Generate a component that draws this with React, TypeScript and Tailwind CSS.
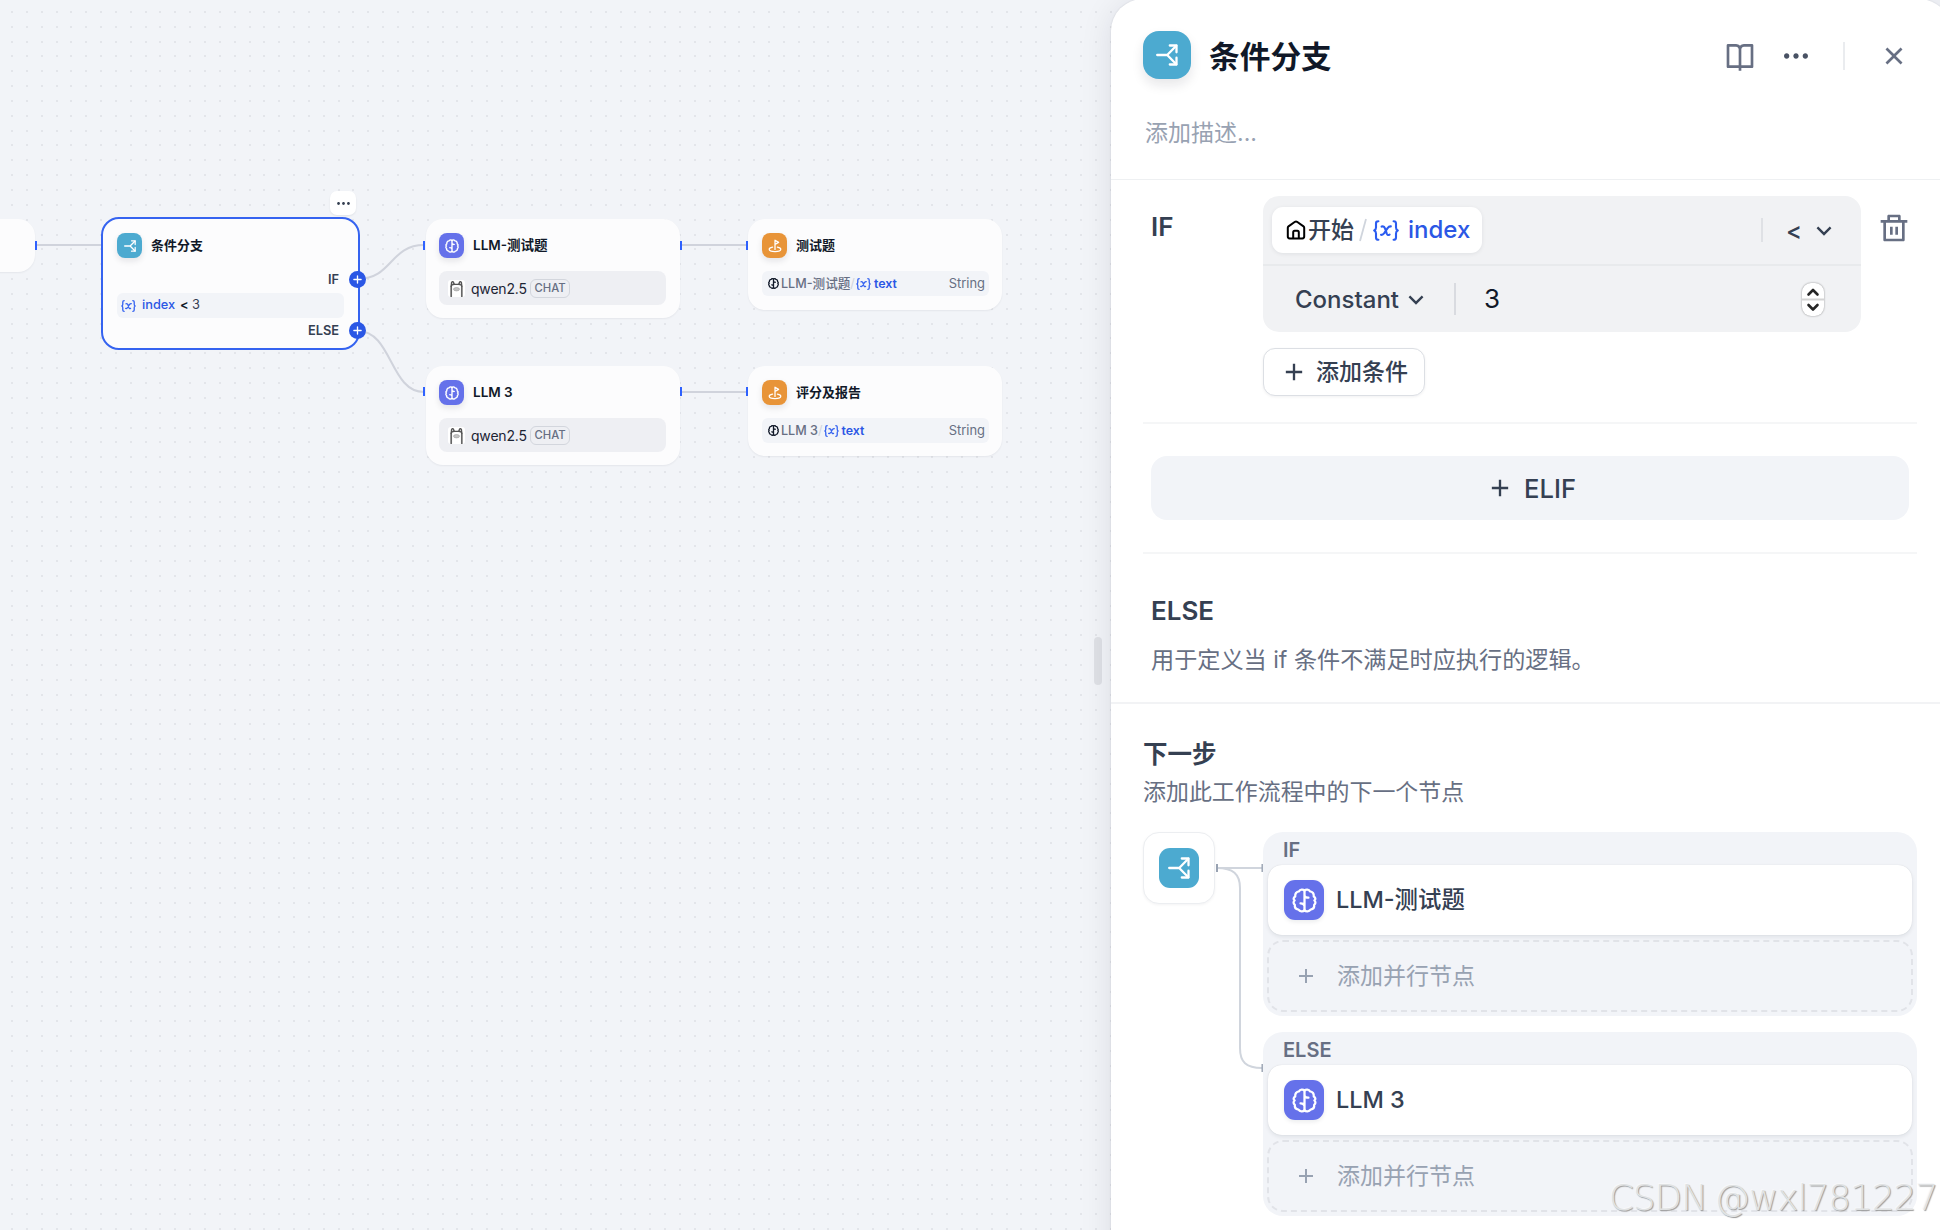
import type { ReactNode } from 'react'
import {
  RiAddLine,
  RiArrowDownSLine,
  RiBookOpenLine,
  RiCloseLine,
  RiDeleteBinLine,
  RiMoreFill,
} from 'react-icons/ri'

const BranchGlyph = ({ className }: { className: string }) => (
  <svg viewBox="0 0 22 22" fill="none" stroke="white" strokeWidth="2.3" strokeLinecap="round" strokeLinejoin="round" className={className}>
    <path d="M1.2 11H11.2M11.2 11L20.3 1.8M11.2 11L20.3 20.2" />
    <path d="M13.8 1.5H20.5V8.3M13.8 20.5H20.5V13.7" />
  </svg>
)

const BrainGlyph = ({ className, width = 1.9 }: { className: string; width?: number }) => (
  <svg viewBox="0 0 24 24" fill="none" stroke="currentColor" strokeWidth={width} strokeLinecap="round" strokeLinejoin="round" className={className}>
    <path d="M12 2.4C10.6 1.2 7.8 1.2 6.8 3.2C4.2 3.4 2.7 5.6 3.1 8.2C1.3 9.3 1.1 10.9 2.5 12C1.1 13.2 1.2 14.9 2.7 16.2C2.4 18.7 3.8 20.4 6.2 20.7C7.6 22.8 10.6 22.8 12 21.5" />
    <path d="M12 2.4C13.4 1.2 16.2 1.2 17.2 3.2C19.8 3.4 21.3 5.6 20.9 8.2C22.7 9.3 22.9 10.9 21.5 12C22.9 13.2 22.8 14.9 21.3 16.2C21.6 18.7 20.2 20.4 17.8 20.7C16.4 22.8 13.4 22.8 12 21.5" />
    <path d="M12 2.4V21.5M12 7.3C12.6 8.8 13.8 9.4 15.8 9.3M12 17.1C11.4 15.4 10.2 14.7 8.2 14.8" />
  </svg>
)

const EndGlyph = () => (
  <svg viewBox="0 0 14 14" fill="none" stroke="white" strokeWidth="1.25" strokeLinecap="round" strokeLinejoin="round" className="size-[14px]">
    <path d="M7 10.4V1.2L10.6 3.4L7 5.4" />
    <path d="M4.6 8.1C2.4 8.5 1.2 9.2 1.2 10.2C1.2 11.6 3.6 12.5 7 12.5S12.8 11.6 12.8 10.2C12.8 9.2 11.6 8.5 9.4 8.1" />
  </svg>
)

const VarGlyph = ({ className, width = 2.3 }: { className: string; width?: number }) => (
  <svg viewBox="0 0 26 21" fill="none" stroke="currentColor" strokeWidth={width} strokeLinecap="round" strokeLinejoin="round" className={className}>
    <path d="M5.4 1.2C3.4 1.2 3 2 3 3.6V7.6C3 9.4 2.6 10 1.2 10.5C2.6 11 3 11.6 3 13.4V17.4C3 19 3.4 19.8 5.4 19.8" />
    <path d="M20.6 1.2C22.6 1.2 23 2 23 3.6V7.6C23 9.4 23.4 10 24.8 10.5C23.4 11 23 11.6 23 13.4V17.4C23 19 22.6 19.8 20.6 19.8" />
    <path d="M8.6 6.6C10.6 6 11.4 6.6 12 8.4L13.8 13.6C14.4 15.2 15.2 15.4 16.6 14.6M17.8 6.4C16.4 6.2 15.6 6.8 14.6 8.2L11.2 13.2C10.2 14.6 9.4 15.2 8 14.8" />
  </svg>
)

const HomeGlyph = () => (
  <svg viewBox="0 0 20 20" fill="none" stroke="black" strokeWidth="2" strokeLinecap="round" strokeLinejoin="round" className="mb-px size-5">
    <path d="M1.8 7.8C1.8 7.2 2.1 6.7 2.5 6.4L9 1.8C9.6 1.4 10.4 1.4 11 1.8L17.5 6.4C17.9 6.7 18.2 7.2 18.2 7.8V16.6C18.2 17.7 17.5 18.4 16.4 18.4H3.6C2.5 18.4 1.8 17.7 1.8 16.6Z" />
    <path d="M7.2 18V12.4C7.2 11.4 7.7 10.8 8.6 10.8H11.4C12.3 10.8 12.8 11.4 12.8 12.4V18" />
  </svg>
)

const LlamaAvatar = () => (
  <svg viewBox="0 0 17 17" className="size-[17px]">
    <rect width="17" height="17" rx="3" fill="white" />
    <g fill="none" stroke="#555" strokeLinecap="round">
      <path d="M3.2 16.4V6.4M13.8 16.4V6.4" strokeWidth="1.7" stroke="#666" />
      <path d="M3.2 6.4L3.6 2.6C4.2 0.9 5.6 1.4 6 4M13.8 6.4L13.4 2.6C12.8 0.9 11.4 1.4 11 4" strokeWidth="1.4" />
      <path d="M3.6 5.4C5.4 3.6 7 4.4 8.5 4.4S11.6 3.6 13.4 5.4" strokeWidth="1.3" />
    </g>
    <ellipse cx="8.5" cy="9.2" rx="3" ry="1.7" fill="#c4c4c4" stroke="#9a9a9a" strokeWidth="0.6" />
  </svg>
)

const PITCH = 14.845
const dots = Array.from({ length: 75 }, (_, c) =>
  Array.from({ length: 84 }, (_, r) => `M${Math.round(11 + c * PITCH)} ${Math.round(-4 + r * PITCH)}h2v2h-2z`).join(''),
).join('')

const NodeIcon = ({ tone, children }: { tone: string; children: ReactNode }) => (
  <div className={`flex size-[25px] shrink-0 items-center justify-center rounded-[8px] text-white shadow-[0_3px_6px_rgba(16,24,40,0.1)] ${tone}`}>
    {children}
  </div>
)

const nodeBase = 'absolute rounded-[17px] bg-[#fcfcfd] shadow-[0_1px_2px_rgba(16,24,40,0.06)]'

const LlmNode = ({ title, pos }: { title: string; pos: string }) => (
  <div className={`${nodeBase} ${pos} h-[99px] w-[254px] pt-[14px] pl-[13px]`}>
    <div className="flex h-[25px] items-center gap-[9px]">
      <NodeIcon tone="bg-[#6571ea]"><BrainGlyph className="size-[14px]" width={2.4} /></NodeIcon>
      <span className="text-[13.5px] leading-none font-semibold whitespace-nowrap text-[#101828]">{title}</span>
    </div>
    <div className="mt-[13px] flex h-[34px] w-[227px] items-center rounded-[8px] bg-[#eeeff3] pl-[9px]">
      <LlamaAvatar />
      <span className="ml-[6px] w-[59px] pt-px text-[14px] leading-none tracking-[-0.2px] text-[#1d2433]">qwen2.5</span>
      <span className="flex h-[19px] w-10 items-center justify-center rounded-[6px] border border-[#d3d6dd] pt-px text-[11.3px] leading-none font-medium text-[#676f83]">CHAT</span>
    </div>
  </div>
)

const EndNode = ({ title, source, pos }: { title: string; source: string; pos: string }) => (
  <div className={`${nodeBase} ${pos} w-[254px] pt-[14px] pl-[14px]`}>
    <div className="flex h-[25px] items-center gap-[9px]">
      <NodeIcon tone="bg-[#e89438]"><EndGlyph /></NodeIcon>
      <span className="text-[13px] leading-none font-semibold text-[#101828]">{title}</span>
    </div>
    <div className="mt-[13px] flex h-[25px] w-[227px] items-center rounded-[6px] bg-[#f2f4f8] pr-[4px] pl-[6px] text-[12.6px] leading-none font-medium text-[#676f83]">
      <BrainGlyph className="mr-[2px] size-[11px] shrink-0 text-[#101828]" width={2.8} />
      <span className="pt-px whitespace-nowrap">{source}</span>
      <span className="mr-px pt-px font-normal text-[#d0d5dd]">/</span>
      <VarGlyph className="h-[12px] w-[15px] shrink-0 text-[#3563f0]" />
      <span className="ml-[3px] pt-px text-[12.4px] font-semibold text-[#2b57e5]">text</span>
      <span className="ml-auto pt-px text-[12.9px] font-normal">String</span>
    </div>
  </div>
)

const PlusHandle = ({ pos }: { pos: string }) => (
  <div className={`absolute flex size-[17px] items-center justify-center rounded-full bg-[#2b57e5] ${pos}`}>
    <svg viewBox="0 0 10 10" className="size-[9px]" stroke="white" strokeWidth="1.5" strokeLinecap="round"><path d="M5 1v8M1 5h8" /></svg>
  </div>
)

const Canvas = () => (
  <div className="absolute inset-0 overflow-hidden bg-[#f2f4f8]">
    <svg className="absolute inset-0" width="1130" height="1230" shapeRendering="crispEdges"><path d={dots} fill="#e3e5ea" /></svg>
    <svg className="absolute inset-0" width="1130" height="1230" fill="none" stroke="#d0d3dc" strokeWidth="2">
      <path d="M37 245H101M682 245H746M682 392H746" />
      <path d="M358 279C392 279 390 245 424 245M358 331C392 331 390 392 424 392" />
      <path d="M36 241V250M424 241V250M681 241V250M747 241V250M424 387V396M681 387V396M747 387V396" stroke="#2f62ff" />
    </svg>
    <div className={`${nodeBase} top-[219px] left-[-219px] h-[53px] w-[254px]`} />

    <div className="absolute top-[191px] left-[330px] flex h-[24px] w-[26px] items-center justify-center rounded-[7px] bg-white text-[#354052] shadow-[0_1px_2px_rgba(16,24,40,0.08)]">
      <RiMoreFill className="size-[17px]" />
    </div>

    <div className="absolute top-[217px] left-[101px] h-[133px] w-[259px] rounded-[18px] border-2 border-[#3563f0] bg-[#fcfcfd] pt-[14px] pl-[14px]">
      <div className="flex h-[25px] items-center gap-[9px]">
        <NodeIcon tone="bg-[#4caad0]"><BranchGlyph className="size-[12px]" /></NodeIcon>
        <span className="text-[13px] leading-none font-semibold text-[#101828]">条件分支</span>
      </div>
      <div className="mt-[9px] flex h-[26px] w-[222px] items-center justify-end pt-px text-[12.8px] leading-none font-semibold text-[#354052]">IF</div>
      <div className="flex h-[25px] w-[227px] items-center rounded-[6px] bg-[#f2f4f8] pl-[4px] text-[12.8px] leading-none">
        <VarGlyph className="h-[12px] w-[15px] text-[#3563f0]" />
        <span className="ml-[6px] w-[38px] font-medium text-[#2b57e5]">index</span>
        <span className="w-[12px] font-semibold text-[#101828]">&lt;</span>
        <span className="text-[#354052]">3</span>
      </div>
      <div className="flex h-[26px] w-[222px] items-center justify-end text-[12.8px] leading-none font-semibold text-[#354052]">ELSE</div>
    </div>
    <PlusHandle pos="left-[349px] top-[271px]" />
    <PlusHandle pos="left-[349px] top-[322px]" />

    <LlmNode title="LLM-测试题" pos="left-[426px] top-[219px]" />
    <LlmNode title="LLM 3" pos="left-[426px] top-[366px]" />
    <EndNode title="测试题" source="LLM-测试题" pos="left-[748px] top-[219px] h-[91px]" />
    <EndNode title="评分及报告" source="LLM 3" pos="left-[748px] top-[366px] h-[90px]" />
    <div className="absolute top-[637px] left-[1094px] h-[48px] w-[8px] rounded-full bg-[#dfe1e6]" />
  </div>
)

const NextGroup = ({ label, name }: { label: string; name: string }) => (
  <div className="h-[184px] rounded-[20px] bg-[#f2f4f8] px-[4px]">
    <div className="flex h-[33px] items-center pt-[2px] pl-[16px] text-[20px] leading-none font-semibold text-[#676f83]">{label}</div>
    <div className="mx-px flex h-[70px] items-center rounded-[14px] bg-white pl-[16px] shadow-[0_0_1px_rgba(16,24,40,0.15),0_2px_4px_rgba(16,24,40,0.08)]">
      <div className="flex size-10 items-center justify-center rounded-[11px] bg-[#6571ea] text-white shadow-[0_2px_4px_rgba(16,24,40,0.08)]">
        <BrainGlyph className="size-[25px]" width={2.2} />
      </div>
      <span className="ml-[12px] pb-[2px] text-[23.4px] leading-none font-medium text-[#354052]">{name}</span>
    </div>
    <div className="mt-[5px] flex h-[72px] items-center rounded-[16px] border-2 border-dashed border-[#e1e3e8] pl-[25px] text-[#98a2b2]">
      <span className="w-[43px]"><RiAddLine className="size-[24px]" /></span>
      <span className="text-[23px] leading-none">添加并行节点</span>
    </div>
  </div>
)

const Stepper = () => (
  <svg viewBox="0 0 22 33" fill="none" className="h-[33px] w-[22px] rounded-[9px] bg-white shadow-[0_0_2px_rgba(0,0,0,0.45)]">
    <path d="M0 16.5H22" stroke="#d4d4d4" strokeWidth="2" />
    <path d="M6.5 11.5L11 7L15.5 11.5M6.5 22L11 26.5L15.5 22" stroke="#262626" strokeWidth="2.6" strokeLinecap="round" strokeLinejoin="round" />
  </svg>
)

const Panel = () => (
  <div className="absolute top-[-1px] left-[1111px] h-[1300px] w-[840px] rounded-[32px] bg-white shadow-[0_0_2px_rgba(16,24,40,0.12),0_4px_32px_rgba(16,24,40,0.1)]">
    <header className="h-[181px] border-b border-[#eef0f2] pt-[32px] pr-[36px] pl-8">
      <div className="flex h-12 items-center">
        <div className="flex size-12 items-center justify-center rounded-[16px] bg-[#4caad0] shadow-[0_6px_12px_rgba(16,24,40,0.1)]">
          <BranchGlyph className="size-[22px]" />
        </div>
        <h1 className="ml-[18px] pt-[4px] text-[30.7px] leading-none font-semibold text-[#101828]">条件分支</h1>
        <div className="ml-auto flex items-center pt-[2px] text-[#676f83]">
          <RiBookOpenLine className="size-8" />
          <RiMoreFill className="ml-[24px] size-8 text-[#495264]" />
          <div className="ml-[31px] h-7 w-[2px] bg-[#eaecef]" />
          <RiCloseLine className="mr-[5px] ml-[33px] size-8" />
        </div>
      </div>
      <p className="mt-[43px] pl-[2px] text-[23px] leading-none text-[#98a2b2]">添加描述...</p>
    </header>

    <section className="border-b-2 border-[#f2f3f5] pr-[34px] pl-8">
      <div className="flex h-[244px] items-start border-b-2 border-[#f5f6f7] pt-4">
        <div className="w-[120px] pt-[18px] pl-[8px] text-[26px] leading-none font-semibold text-[#354052]">IF</div>
        <div>
          <div className="h-[136px] w-[598px] rounded-[16px] bg-[#f1f2f4]">
            <div className="flex h-[70px] items-center border-b-2 border-[#e8eaec] pl-[9px]">
              <div className="flex h-[46px] w-[210px] items-center rounded-[11px] bg-white pl-[14px] text-[23px] leading-none font-medium text-[#354052] shadow-[0_1px_4px_rgba(16,24,40,0.08)]">
                <HomeGlyph />
                <span className="ml-[2px]">开始</span>
                <svg viewBox="0 0 8 24" className="ml-[5px] h-6 w-2" stroke="#d0d5dd" strokeWidth="1.8"><path d="M7 1L1 23" /></svg>
                <VarGlyph className="ml-[6px] h-[21px] w-[26px] text-[#2b5cf0]" width={2.1} />
                <span className="ml-[9px] text-[24px] text-[#2b57e5]">index</span>
              </div>
              <div className="ml-auto h-6 w-[2px] bg-[#dfe1e5]" />
              <span className="mt-[2px] ml-[23px] text-[24px] leading-none font-medium text-[#354052]">&lt;</span>
              <RiArrowDownSLine className="mt-[2px] mr-[23px] ml-[8px] size-7 text-[#354052]" />
            </div>
            <div className="flex h-[66px] items-center pr-[37px] pl-[32px] text-[#354052]">
              <span className="w-[107px] pt-[2px] text-[24px] leading-none font-medium">Constant</span>
              <RiArrowDownSLine className="mt-[2px] size-7" />
              <div className="ml-[24px] h-8 w-[2px] bg-[#d9dbe0]" />
              <span className="ml-[28px] text-[26px] leading-none text-[#101828]">3</span>
              <span className="ml-auto flex pt-px"><Stepper /></span>
            </div>
          </div>
          <div className="mt-4 flex h-12 w-[162px] items-center rounded-[12px] border border-[#dcdfe4] bg-white pl-[16px] text-[#354052] shadow-[0_1px_3px_rgba(16,24,40,0.06)]">
            <RiAddLine className="size-7" />
            <span className="ml-[8px] text-[23px] leading-none font-medium">添加条件</span>
          </div>
        </div>
        <RiDeleteBinLine className="mt-[16px] ml-[17px] size-8 text-[#676f83]" />
      </div>
      <div className="flex h-[130px] items-center border-b-2 border-[#f5f6f7] px-2">
        <div className="flex h-16 w-full items-center justify-center gap-[10px] rounded-[16px] bg-[#f2f4f8] pl-[2px] text-[25.6px] leading-none font-medium text-[#354052]">
          <RiAddLine className="size-7" />
          <span className="pt-[2px]">ELIF</span>
        </div>
      </div>
      <div className="h-[148px] pt-[44px] pl-[8px]">
        <h2 className="text-[26px] leading-none font-semibold text-[#354052]">ELSE</h2>
        <p className="mt-[25px] text-[23.15px] leading-none text-[#676f83]">用于定义当 if 条件不满足时应执行的逻辑。</p>
      </div>
    </section>

    <section className="pt-[38px] pr-[34px] pl-8">
      <h2 className="text-[24.5px] leading-none font-semibold text-[#354052]">下一步</h2>
      <p className="mt-[14px] text-[22.95px] leading-none text-[#676f83]">添加此工作流程中的下一个节点</p>
      <div className="mt-[29px] flex">
        <div className="flex size-[72px] items-center justify-center rounded-[16px] border border-[#eceef1] bg-white shadow-[0_1px_3px_rgba(16,24,40,0.05)]">
          <div className="flex size-10 items-center justify-center rounded-[11px] bg-[#4caad0]">
            <BranchGlyph className="size-[22px]" />
          </div>
        </div>
        <svg width="48" height="260" fill="none" stroke="#d0d5dd" strokeWidth="2">
          <path d="M2 36H47M2 36C18 36 25 42 25 56V216C25 230 31 236 47 236" />
          <path d="M2 32V40" stroke="#98a2b2" />
          <path d="M47.2 32V40M47.2 232V240" stroke="#98a2b2" strokeWidth="1.4" />
        </svg>
        <div className="flex flex-1 flex-col gap-4">
          <NextGroup label="IF" name="LLM-测试题" />
          <NextGroup label="ELSE" name="LLM 3" />
        </div>
      </div>
    </section>
  </div>
)

export default function App() {
  return (
    <main
      lang="zh-CN"
      className="relative h-[1230px] w-[1940px] overflow-hidden font-['Inter','Noto_Sans_CJK_SC',sans-serif]"
    >
      <Canvas />
      <Panel />
      <div className="absolute top-[1179px] left-[1609px] font-['DejaVu_Sans',sans-serif] text-[35.5px] leading-[38px] font-extralight tracking-[-0.8px] whitespace-nowrap text-[#e0e2e3] [text-shadow:1px_1px_1px_#9a9a9a,-1px_-1px_0_#f7f8fa] [word-spacing:-3px]">
        CSDN @wxl781227
      </div>
    </main>
  )
}
